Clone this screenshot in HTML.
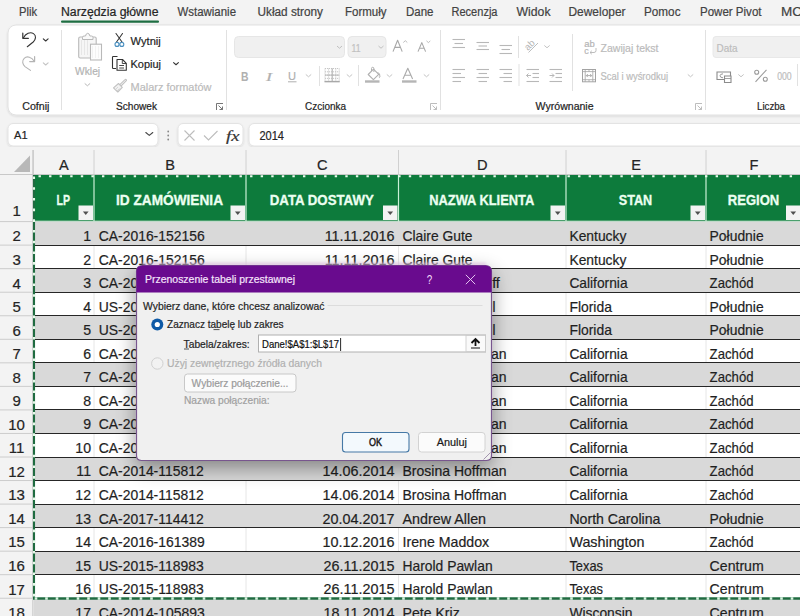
<!DOCTYPE html><html><head><meta charset="utf-8"><style>html,body{margin:0;padding:0;background:#f3f3f3;overflow:hidden;width:800px;height:616px}svg{display:block}text{font-family:"Liberation Sans",sans-serif}</style></head><body>
<svg width="800" height="616" viewBox="0 0 800 616">
<defs><filter id="sh" x="-20%" y="-20%" width="140%" height="150%"><feGaussianBlur in="SourceAlpha" stdDeviation="10"/><feOffset dy="7"/><feComponentTransfer><feFuncA type="linear" slope="0.4"/></feComponentTransfer><feMerge><feMergeNode/><feMergeNode in="SourceGraphic"/></feMerge></filter><filter id="rsh" x="-5%" y="-20%" width="110%" height="140%"><feGaussianBlur in="SourceAlpha" stdDeviation="1"/><feOffset dy="1"/><feComponentTransfer><feFuncA type="linear" slope="0.12"/></feComponentTransfer><feMerge><feMergeNode/><feMergeNode in="SourceGraphic"/></feMerge></filter><filter id="pg" x="-10%" y="-200%" width="120%" height="500%"><feGaussianBlur stdDeviation="1"/></filter></defs>
<rect x="0" y="0" width="800" height="616" fill="#f3f3f3" />
<text x="19" y="16" font-size="12" fill="#424242" stroke="#424242" stroke-width="0.2" textLength="18" lengthAdjust="spacingAndGlyphs">Plik</text>
<text x="61" y="16" font-size="12" fill="#242424" stroke="#242424" stroke-width="0.2" textLength="97.5" lengthAdjust="spacingAndGlyphs">Narzędzia główne</text>
<text x="177.5" y="16" font-size="12" fill="#424242" stroke="#424242" stroke-width="0.2" textLength="58.5" lengthAdjust="spacingAndGlyphs">Wstawianie</text>
<text x="257.5" y="16" font-size="12" fill="#424242" stroke="#424242" stroke-width="0.2" textLength="65.5" lengthAdjust="spacingAndGlyphs">Układ strony</text>
<text x="345" y="16" font-size="12" fill="#424242" stroke="#424242" stroke-width="0.2" textLength="41.5" lengthAdjust="spacingAndGlyphs">Formuły</text>
<text x="406" y="16" font-size="12" fill="#424242" stroke="#424242" stroke-width="0.2" textLength="27.5" lengthAdjust="spacingAndGlyphs">Dane</text>
<text x="451.5" y="16" font-size="12" fill="#424242" stroke="#424242" stroke-width="0.2" textLength="46.0" lengthAdjust="spacingAndGlyphs">Recenzja</text>
<text x="516.5" y="16" font-size="12" fill="#424242" stroke="#424242" stroke-width="0.2" textLength="34.0" lengthAdjust="spacingAndGlyphs">Widok</text>
<text x="568.5" y="16" font-size="12" fill="#424242" stroke="#424242" stroke-width="0.2" textLength="57.0" lengthAdjust="spacingAndGlyphs">Deweloper</text>
<text x="644" y="16" font-size="12" fill="#424242" stroke="#424242" stroke-width="0.2" textLength="36.5" lengthAdjust="spacingAndGlyphs">Pomoc</text>
<text x="700" y="16" font-size="12" fill="#424242" stroke="#424242" stroke-width="0.2" textLength="61.5" lengthAdjust="spacingAndGlyphs">Power Pivot</text>
<text x="781" y="16" font-size="12" fill="#424242" stroke="#424242" stroke-width="0.2" textLength="21" lengthAdjust="spacingAndGlyphs">MC</text>
<rect x="61" y="20.5" width="98" height="2.2" fill="#1e6e42" rx="1" />
<g filter="url(#rsh)">
<rect x="8" y="25" width="820" height="90" fill="#ffffff" stroke="#e1e1e1" stroke-width="1" rx="8" />
</g>
<line x1="61.5" y1="30" x2="61.5" y2="110" stroke="#e1e1e1" stroke-width="1" />
<line x1="226.5" y1="30" x2="226.5" y2="110" stroke="#e1e1e1" stroke-width="1" />
<line x1="440.5" y1="30" x2="440.5" y2="110" stroke="#e1e1e1" stroke-width="1" />
<line x1="705.5" y1="30" x2="705.5" y2="110" stroke="#e1e1e1" stroke-width="1" />
<text x="22.2" y="110" font-size="10" fill="#242424" stroke="#242424" stroke-width="0.2" textLength="27.3" lengthAdjust="spacingAndGlyphs">Cofnij</text>
<text x="116" y="110" font-size="10" fill="#242424" stroke="#242424" stroke-width="0.2" textLength="41" lengthAdjust="spacingAndGlyphs">Schowek</text>
<text x="305" y="110" font-size="10" fill="#242424" stroke="#242424" stroke-width="0.2" textLength="41" lengthAdjust="spacingAndGlyphs">Czcionka</text>
<text x="535.6" y="110" font-size="10" fill="#242424" stroke="#242424" stroke-width="0.2" textLength="58" lengthAdjust="spacingAndGlyphs">Wyrównanie</text>
<text x="757" y="110" font-size="10" fill="#242424" stroke="#242424" stroke-width="0.2" textLength="28" lengthAdjust="spacingAndGlyphs">Liczba</text>
<path d="M216.5 110 V103.5 H223" stroke="#666" fill="none" stroke-width="0.9" />
<path d="M218.5 105.5 L222.5 109.5 M222.5 106.5 V109.5 H219.5" stroke="#666" fill="none" stroke-width="0.9" />
<path d="M430.5 110 V103.5 H437" stroke="#b5b5b5" fill="none" stroke-width="0.9" />
<path d="M432.5 105.5 L436.5 109.5 M436.5 106.5 V109.5 H433.5" stroke="#b5b5b5" fill="none" stroke-width="0.9" />
<path d="M695.5 110 V103.5 H702" stroke="#b5b5b5" fill="none" stroke-width="0.9" />
<path d="M697.5 105.5 L701.5 109.5 M701.5 106.5 V109.5 H698.5" stroke="#b5b5b5" fill="none" stroke-width="0.9" />
<path d="M22.8 33.2 V38.3 H28.4" stroke="#333" fill="none" stroke-width="1.2" stroke-linecap="round" stroke-linejoin="round"/>
<path d="M23.3 37.9 C25.8 33.4 30.2 31.6 33.5 33.6 C36.6 35.6 35.8 39.6 33.2 42 L27.3 46.7" stroke="#333" fill="none" stroke-width="1.1" stroke-linecap="round"/>
<path d="M43.300000000000004 38.900000000000006 L45.7 40.980000000000004 L48.1 38.900000000000006" stroke="#333" fill="none" stroke-width="1.1" stroke-linecap="round" stroke-linejoin="round"/>
<path d="M34.6 56.6 V61.6 H29.7" stroke="#b4b4b4" fill="none" stroke-width="1.2" stroke-linecap="round" stroke-linejoin="round"/>
<path d="M34.1 61.2 C31.8 57 27 55.6 24.2 58.3 C21.5 61 22.7 64.5 25 66.6 L30.5 70.4" stroke="#b4b4b4" fill="none" stroke-width="1.1" stroke-linecap="round"/>
<path d="M43.300000000000004 62.900000000000006 L45.7 64.98 L48.1 62.900000000000006" stroke="#c4c4c4" fill="none" stroke-width="1.1" stroke-linecap="round" stroke-linejoin="round"/>
<rect x="78.7" y="37" width="17.5" height="21" fill="#f6f6f6" stroke="#b9b9b9" stroke-width="1.1" rx="1.5" />
<path d="M81.5 40 V55 M84.5 40 V55 M87.5 40 V55" stroke="#e2e2e2" fill="none" stroke-width="0.8" />
<path d="M82.5 39.5 V37.5 Q82.5 36 84 36 H85.5 Q86 33.3 87.7 33.3 Q89.4 33.3 89.9 36 H91.5 Q93 36 93 37.5 V39.5 Z" stroke="#b9b9b9" fill="#f9f9f9" stroke-width="1.0" />
<rect x="90.5" y="44.2" width="11" height="15.8" fill="#fdfdfd" stroke="#b9b9b9" stroke-width="1.1" />
<path d="M92.5 46 V58 M95.5 46 V58 M98.5 46 V58" stroke="#ececec" fill="none" stroke-width="0.7" />
<text x="75.1" y="74.6" font-size="11.2" fill="#b3b3b3" stroke="#b3b3b3" stroke-width="0.2" textLength="25" lengthAdjust="spacingAndGlyphs">Wklej</text>
<path d="M85.0 83.7 L87.4 85.78 L89.80000000000001 83.7" stroke="#b8b8b8" fill="none" stroke-width="1" stroke-linecap="round" stroke-linejoin="round"/>
<path d="M116 33.5 L122 42 M122.5 33.5 L116.5 42" stroke="#333" fill="none" stroke-width="1.05" stroke-linecap="round"/>
<circle cx="117" cy="44.4" r="2" fill="none" stroke="#4a8fbf" stroke-width="1.1"/>
<circle cx="121.8" cy="44.4" r="2" fill="none" stroke="#4a8fbf" stroke-width="1.1"/>
<text x="130.5" y="44.5" font-size="11.2" fill="#242424" stroke="#242424" stroke-width="0.2" textLength="30.3" lengthAdjust="spacingAndGlyphs">Wytnij</text>
<path d="M117.5 56.5 H113.2 Q112.5 56.5 112.5 57.2 V67.8 Q112.5 68.5 113.2 68.5 H116" stroke="#333" fill="none" stroke-width="1.1" />
<path d="M117 59.5 H122.5 L126.3 63.3 V70.3 H117 Z" stroke="#333" fill="none" stroke-width="1.1" stroke-linejoin="round"/>
<path d="M122.3 59.7 V63.5 H126" stroke="#333" fill="none" stroke-width="0.9" />
<path d="M119.2 65.5 H124 M119.2 68 H124" stroke="#333" fill="none" stroke-width="0.9" />
<text x="130.5" y="67.7" font-size="11.2" fill="#242424" stroke="#242424" stroke-width="0.2" textLength="30.5" lengthAdjust="spacingAndGlyphs">Kopiuj</text>
<path d="M173.6 62.7 L176 64.78 L178.4 62.7" stroke="#333" fill="none" stroke-width="1.1" stroke-linecap="round" stroke-linejoin="round"/>
<path d="M121 86 L126.3 80.7 Q126.8 80 126 79.5 Q125.5 79.2 125 79.7 L119.6 84.8" stroke="#c2c2c2" fill="none" stroke-width="1.1" stroke-linejoin="round"/>
<path d="M118.5 83.5 L122.3 87.3 L117.8 92 L113.5 87.8 Z" stroke="#c2c2c2" fill="#f2f2f2" stroke-width="1.1" stroke-linejoin="round"/>
<path d="M115.5 89.5 L118 87 M117 91 L119.5 88.5" stroke="#cfcfcf" fill="none" stroke-width="0.8" />
<text x="130.5" y="90.7" font-size="11.2" fill="#bbbbbb" stroke="#bbbbbb" stroke-width="0.2" textLength="81" lengthAdjust="spacingAndGlyphs">Malarz formatów</text>
<rect x="234.5" y="36.5" width="110" height="21" fill="#f0f0f0" stroke="#e6e6e6" stroke-width="1" rx="4" />
<path d="M337.3 46.3 L339.5 48.22 L341.7 46.3" stroke="#c0c0c0" fill="none" stroke-width="1" stroke-linecap="round" stroke-linejoin="round"/>
<rect x="348" y="36.5" width="38" height="21" fill="#f0f0f0" stroke="#e6e6e6" stroke-width="1" rx="4" />
<text x="351.5" y="52" font-size="11" fill="#c0c0c0" stroke="#c0c0c0" stroke-width="0.2" textLength="9" lengthAdjust="spacingAndGlyphs">11</text>
<path d="M378.8 46.3 L381 48.22 L383.2 46.3" stroke="#c0c0c0" fill="none" stroke-width="1" stroke-linecap="round" stroke-linejoin="round"/>
<path d="M393 51.6 L397.6 40.3 L402.2 51.6 M394.7 47.4 H400.5" stroke="#a8a8a8" fill="none" stroke-width="1.1" stroke-linejoin="round"/>
<path d="M403.3 42.5 L405.3 40.7 L407.3 42.5" stroke="#b5b5b5" fill="none" stroke-width="0.9" />
<path d="M418 51.6 L421.8 42.6 L425.6 51.6 M419.4 48.2 H424.2" stroke="#a8a8a8" fill="none" stroke-width="1.1" stroke-linejoin="round"/>
<path d="M426.5 40.9 L428.4 42.6 L430.3 40.9" stroke="#b5b5b5" fill="none" stroke-width="0.9" />
<text x="241" y="80.5" font-size="12" fill="#b0b0b0" font-weight="bold" textLength="7.5" lengthAdjust="spacingAndGlyphs">B</text>
<text x="266" y="80.5" font-size="12" fill="#b0b0b0" stroke="#b0b0b0" stroke-width="0.2" font-style="italic" style='font-family:"Liberation Serif", serif' textLength="6" lengthAdjust="spacingAndGlyphs">I</text>
<text x="288" y="79.5" font-size="11.5" fill="#b0b0b0" stroke="#b0b0b0" stroke-width="0.2" textLength="8" lengthAdjust="spacingAndGlyphs">U</text>
<line x1="288" y1="81.8" x2="296.5" y2="81.8" stroke="#b0b0b0" stroke-width="1" />
<path d="M306.1 74.7 L308.5 76.78 L310.9 74.7" stroke="#c4c4c4" fill="none" stroke-width="1" stroke-linecap="round" stroke-linejoin="round"/>
<line x1="319.5" y1="66" x2="319.5" y2="86" stroke="#e1e1e1" stroke-width="1" />
<line x1="325" y1="68.5" x2="325" y2="81.5" stroke="#c0c0c0" stroke-width="0.9" stroke-dasharray="1.1 0.9"/>
<line x1="328.6" y1="68.5" x2="328.6" y2="81.5" stroke="#c0c0c0" stroke-width="0.9" stroke-dasharray="1.1 0.9"/>
<line x1="332.2" y1="68.5" x2="332.2" y2="81.5" stroke="#c0c0c0" stroke-width="0.9" stroke-dasharray="1.1 0.9"/>
<line x1="335.8" y1="68.5" x2="335.8" y2="81.5" stroke="#c0c0c0" stroke-width="0.9" stroke-dasharray="1.1 0.9"/>
<line x1="339.2" y1="68.5" x2="339.2" y2="81.5" stroke="#c0c0c0" stroke-width="0.9" stroke-dasharray="1.1 0.9"/>
<line x1="325" y1="68.5" x2="339.2" y2="68.5" stroke="#c0c0c0" stroke-width="0.9" stroke-dasharray="1.1 0.9"/>
<line x1="325" y1="71.8" x2="339.2" y2="71.8" stroke="#c0c0c0" stroke-width="0.9" stroke-dasharray="1.1 0.9"/>
<line x1="325" y1="75.1" x2="339.2" y2="75.1" stroke="#c0c0c0" stroke-width="0.9" stroke-dasharray="1.1 0.9"/>
<line x1="325" y1="78.4" x2="339.2" y2="78.4" stroke="#c0c0c0" stroke-width="0.9" stroke-dasharray="1.1 0.9"/>
<line x1="332.2" y1="68.5" x2="332.2" y2="81.5" stroke="#b0b0b0" stroke-width="0.9" />
<line x1="325" y1="75.1" x2="339.2" y2="75.1" stroke="#b0b0b0" stroke-width="0.9" />
<line x1="324.5" y1="81.6" x2="339.7" y2="81.6" stroke="#a8a8a8" stroke-width="1.5" />
<path d="M347.1 74.7 L349.5 76.78 L351.9 74.7" stroke="#c4c4c4" fill="none" stroke-width="1" stroke-linecap="round" stroke-linejoin="round"/>
<line x1="358.5" y1="65" x2="358.5" y2="86" stroke="#e1e1e1" stroke-width="1" />
<g transform="translate(1.2,0)">
<path d="M367 74.5 L372.3 69.2 L377.5 74.4 L372.2 79.7 Z" stroke="#b0b0b0" fill="none" stroke-width="1.1" stroke-linejoin="round"/>
<path d="M370.3 71.2 V68.5 Q370.3 67.3 371.5 67.3 Q372.7 67.3 372.7 68.5 V72" stroke="#b0b0b0" fill="none" stroke-width="1" />
<path d="M376.5 72.2 Q379 73.5 378.8 77 Q378.3 78 377.6 77" stroke="#b0b0b0" fill="none" stroke-width="1" />
</g>
<rect x="365" y="80.3" width="14.5" height="2.4" fill="#b5b5b5" />
<path d="M387.1 74.7 L389.5 76.78 L391.9 74.7" stroke="#c4c4c4" fill="none" stroke-width="1" stroke-linecap="round" stroke-linejoin="round"/>
<path d="M403 79 L407.8 68.3 L412.6 79 M404.7 75.3 H410.9" stroke="#ababab" fill="none" stroke-width="1.1" stroke-linejoin="round"/>
<rect x="402" y="80.3" width="14.5" height="2.4" fill="#b5b5b5" />
<path d="M424.1 74.7 L426.5 76.78 L428.9 74.7" stroke="#c4c4c4" fill="none" stroke-width="1" stroke-linecap="round" stroke-linejoin="round"/>
<line x1="452.5" y1="39.5" x2="465" y2="39.5" stroke="#b8b8b8" stroke-width="1.1" />
<line x1="454.5" y1="43.5" x2="463" y2="43.5" stroke="#b8b8b8" stroke-width="1.1" />
<line x1="452.5" y1="47.5" x2="465" y2="47.5" stroke="#b8b8b8" stroke-width="1.1" />
<line x1="476.5" y1="42.5" x2="489" y2="42.5" stroke="#b8b8b8" stroke-width="1.1" />
<line x1="478.5" y1="46" x2="487" y2="46" stroke="#b8b8b8" stroke-width="1.1" />
<line x1="476.5" y1="49.5" x2="489" y2="49.5" stroke="#b8b8b8" stroke-width="1.1" />
<line x1="499.5" y1="45.5" x2="512" y2="45.5" stroke="#b8b8b8" stroke-width="1.1" />
<line x1="501.5" y1="49.5" x2="510" y2="49.5" stroke="#b8b8b8" stroke-width="1.1" />
<line x1="499.5" y1="53.5" x2="512" y2="53.5" stroke="#b8b8b8" stroke-width="1.1" />
<line x1="518.5" y1="36" x2="518.5" y2="58" stroke="#e1e1e1" stroke-width="1" />
<text transform="translate(528,51) rotate(-45)" font-size="9.5" fill="#b5b5b5">ab</text>
<path d="M528.5 52.5 L538 43" stroke="#b5b5b5" fill="none" stroke-width="0.9" />
<path d="M544.6 45.7 L547 47.78 L549.4 45.7" stroke="#c4c4c4" fill="none" stroke-width="1" stroke-linecap="round" stroke-linejoin="round"/>
<line x1="452.5" y1="69.5" x2="465" y2="69.5" stroke="#b8b8b8" stroke-width="1.1" />
<line x1="452.5" y1="73.5" x2="461" y2="73.5" stroke="#b8b8b8" stroke-width="1.1" />
<line x1="452.5" y1="77.5" x2="465" y2="77.5" stroke="#b8b8b8" stroke-width="1.1" />
<line x1="452.5" y1="81.5" x2="461" y2="81.5" stroke="#b8b8b8" stroke-width="1.1" />
<line x1="476.5" y1="69.5" x2="489" y2="69.5" stroke="#b8b8b8" stroke-width="1.1" />
<line x1="478.5" y1="73.5" x2="487" y2="73.5" stroke="#b8b8b8" stroke-width="1.1" />
<line x1="476.5" y1="77.5" x2="489" y2="77.5" stroke="#b8b8b8" stroke-width="1.1" />
<line x1="478.5" y1="81.5" x2="487" y2="81.5" stroke="#b8b8b8" stroke-width="1.1" />
<line x1="499.5" y1="69.5" x2="512" y2="69.5" stroke="#b8b8b8" stroke-width="1.1" />
<line x1="503.5" y1="73.5" x2="512" y2="73.5" stroke="#b8b8b8" stroke-width="1.1" />
<line x1="499.5" y1="77.5" x2="512" y2="77.5" stroke="#b8b8b8" stroke-width="1.1" />
<line x1="503.5" y1="81.5" x2="512" y2="81.5" stroke="#b8b8b8" stroke-width="1.1" />
<line x1="519" y1="64" x2="519" y2="86" stroke="#e1e1e1" stroke-width="1" />
<line x1="526.5" y1="69.5" x2="539" y2="69.5" stroke="#b8b8b8" stroke-width="1.1" />
<line x1="532.5" y1="73.5" x2="539" y2="73.5" stroke="#b8b8b8" stroke-width="1.1" />
<line x1="532.5" y1="77.5" x2="539" y2="77.5" stroke="#b8b8b8" stroke-width="1.1" />
<line x1="526.5" y1="81.5" x2="539" y2="81.5" stroke="#b8b8b8" stroke-width="1.1" />
<path d="M531 75.5 H526.5 M528.5 73.5 L526.5 75.5 L528.5 77.5" stroke="#b8b8b8" fill="none" stroke-width="1" />
<line x1="549.5" y1="69.5" x2="562" y2="69.5" stroke="#b8b8b8" stroke-width="1.1" />
<line x1="555.5" y1="73.5" x2="562" y2="73.5" stroke="#b8b8b8" stroke-width="1.1" />
<line x1="555.5" y1="77.5" x2="562" y2="77.5" stroke="#b8b8b8" stroke-width="1.1" />
<line x1="549.5" y1="81.5" x2="562" y2="81.5" stroke="#b8b8b8" stroke-width="1.1" />
<path d="M549.5 75.5 H554 M552 73.5 L554 75.5 L552 77.5" stroke="#b8b8b8" fill="none" stroke-width="1" />
<line x1="572.5" y1="34" x2="572.5" y2="91" stroke="#e1e1e1" stroke-width="1" />
<text x="584.3" y="47" font-size="9" fill="#b5b5b5" stroke="#b5b5b5" stroke-width="0.2" textLength="10.5" lengthAdjust="spacingAndGlyphs">ab</text>
<text x="584.3" y="53.5" font-size="9" fill="#b5b5b5" stroke="#b5b5b5" stroke-width="0.2" textLength="4.5" lengthAdjust="spacingAndGlyphs">c</text>
<path d="M596 48 V50.5 Q596 52.5 594 52.5 H590 M591.8 50.8 L590 52.5 L591.8 54.2" stroke="#b5b5b5" fill="none" stroke-width="0.9" />
<text x="600.5" y="51.5" font-size="11.2" fill="#bbbbbb" stroke="#bbbbbb" stroke-width="0.2" textLength="58" lengthAdjust="spacingAndGlyphs">Zawijaj tekst</text>
<rect x="582.5" y="69.5" width="13" height="12.3" fill="none" stroke="#a3a3a3" stroke-width="1" />
<line x1="585.2" y1="69.5" x2="585.2" y2="81.8" stroke="#a3a3a3" stroke-width="0.8" />
<line x1="592.8" y1="69.5" x2="592.8" y2="81.8" stroke="#a3a3a3" stroke-width="0.8" />
<line x1="582.5" y1="71.6" x2="595.5" y2="71.6" stroke="#a3a3a3" stroke-width="0.8" />
<line x1="582.5" y1="79.7" x2="595.5" y2="79.7" stroke="#a3a3a3" stroke-width="0.8" />
<line x1="589" y1="69.5" x2="589" y2="71.6" stroke="#a3a3a3" stroke-width="0.8" />
<line x1="589" y1="79.7" x2="589" y2="81.8" stroke="#a3a3a3" stroke-width="0.8" />
<path d="M586.3 75.6 H591.7 M587.8 74.1 L586.3 75.6 L587.8 77.1 M590.2 74.1 L591.7 75.6 L590.2 77.1" stroke="#a3a3a3" fill="none" stroke-width="0.9" />
<text x="600.5" y="80" font-size="11.2" fill="#bbbbbb" stroke="#bbbbbb" stroke-width="0.2" textLength="67.5" lengthAdjust="spacingAndGlyphs">Scal i wyśrodkuj</text>
<path d="M688.1 74.7 L690.5 76.78 L692.9 74.7" stroke="#c4c4c4" fill="none" stroke-width="1" stroke-linecap="round" stroke-linejoin="round"/>
<rect x="713" y="36.5" width="100" height="21" fill="#f0f0f0" stroke="#e8e8e8" stroke-width="1" rx="3" />
<text x="716.5" y="51.5" font-size="11" fill="#bdbdbd" stroke="#bdbdbd" stroke-width="0.2" textLength="21" lengthAdjust="spacingAndGlyphs">Data</text>
<path d="M717 72 H730.5 V79.5 H717 Z" stroke="#8c8c8c" fill="none" stroke-width="1.1" />
<path d="M723 73.8 Q720 74 720 75.8 Q720 77.6 723 77.8" stroke="#8c8c8c" fill="none" stroke-width="0.9" />
<path d="M724.5 76 H731 V82.5 H724.5 Z" stroke="#8c8c8c" fill="#ffffff" stroke-width="1.1" />
<line x1="724.5" y1="78.5" x2="731" y2="78.5" stroke="#8c8c8c" stroke-width="0.8" />
<path d="M738.6 74.7 L741 76.78 L743.4 74.7" stroke="#c4c4c4" fill="none" stroke-width="1" stroke-linecap="round" stroke-linejoin="round"/>
<circle cx="756.7" cy="72.2" r="2" fill="none" stroke="#9a9a9a" stroke-width="1.1"/>
<circle cx="765.3" cy="79.3" r="2" fill="none" stroke="#9a9a9a" stroke-width="1.1"/>
<line x1="766.5" y1="69.8" x2="755.5" y2="81.8" stroke="#9a9a9a" stroke-width="1.1" />
<text x="777.2" y="79.5" font-size="10" fill="#bdbdbd" stroke="#bdbdbd" stroke-width="0.2" textLength="14.5" lengthAdjust="spacingAndGlyphs">000</text>
<line x1="797.5" y1="64" x2="797.5" y2="86" stroke="#e1e1e1" stroke-width="1" />
<g filter="url(#rsh)">
<rect x="8" y="123.5" width="150" height="22.5" fill="#ffffff" stroke="#e3e3e3" stroke-width="1" rx="5" />
<rect x="178" y="123.5" width="65" height="22.5" fill="#ffffff" stroke="#e3e3e3" stroke-width="1" rx="5" />
<rect x="249" y="123.5" width="580" height="22.5" fill="#ffffff" stroke="#e3e3e3" stroke-width="1" rx="5" />
</g>
<text x="14" y="138.8" font-size="11.2" fill="#242424" stroke="#242424" stroke-width="0.2" textLength="13.6" lengthAdjust="spacingAndGlyphs">A1</text>
<path d="M145.8 132.5 L149.3 135.38000000000002 L152.8 132.5" stroke="#444" fill="none" stroke-width="1.1" stroke-linecap="round" stroke-linejoin="round"/>
<circle cx="168.2" cy="131.5" r="0.9" fill="#888"/>
<circle cx="168.2" cy="135.5" r="0.9" fill="#888"/>
<circle cx="168.2" cy="139.5" r="0.9" fill="#888"/>
<path d="M184.5 130.5 L194.5 140.5 M194.5 130.5 L184.5 140.5" stroke="#bdbdbd" fill="none" stroke-width="1.1" />
<path d="M204 135.5 L208.5 140 L217.5 131" stroke="#bdbdbd" fill="none" stroke-width="1.1" />
<text x="226" y="140.5" font-size="15" fill="#333" stroke="#333" stroke-width="0.2" font-style="italic" style='font-family:"Liberation Serif", serif' textLength="13.5" lengthAdjust="spacingAndGlyphs">fx</text>
<text x="259.4" y="139.5" font-size="12" fill="#242424" stroke="#242424" stroke-width="0.2" textLength="24.6" lengthAdjust="spacingAndGlyphs">2014</text>
<rect x="0" y="147" width="800" height="28" fill="#f3f3f3" />
<line x1="33.5" y1="150" x2="33.5" y2="174.5" stroke="#d0d0d0" stroke-width="1" />
<line x1="94" y1="150" x2="94" y2="174.5" stroke="#d0d0d0" stroke-width="1" />
<line x1="246" y1="150" x2="246" y2="174.5" stroke="#d0d0d0" stroke-width="1" />
<line x1="398.5" y1="150" x2="398.5" y2="174.5" stroke="#d0d0d0" stroke-width="1" />
<line x1="566" y1="150" x2="566" y2="174.5" stroke="#d0d0d0" stroke-width="1" />
<line x1="706" y1="150" x2="706" y2="174.5" stroke="#d0d0d0" stroke-width="1" />
<line x1="0" y1="174.5" x2="800" y2="174.5" stroke="#c8c8c8" stroke-width="1" />
<path d="M30 155.5 L30 172 L14 172 Z" stroke="none" fill="#b8b8b8" stroke-width="1" />
<text x="63.75" y="170" font-size="14.6" fill="#242424" stroke="#242424" stroke-width="0.2" text-anchor="middle">A</text>
<text x="170.0" y="170" font-size="14.6" fill="#242424" stroke="#242424" stroke-width="0.2" text-anchor="middle">B</text>
<text x="322.25" y="170" font-size="14.6" fill="#242424" stroke="#242424" stroke-width="0.2" text-anchor="middle">C</text>
<text x="482.25" y="170" font-size="14.6" fill="#242424" stroke="#242424" stroke-width="0.2" text-anchor="middle">D</text>
<text x="636.0" y="170" font-size="14.6" fill="#242424" stroke="#242424" stroke-width="0.2" text-anchor="middle">E</text>
<text x="754.0" y="170" font-size="14.6" fill="#242424" stroke="#242424" stroke-width="0.2" text-anchor="middle">F</text>
<rect x="0" y="175" width="33.5" height="441" fill="#f3f3f3" />
<line x1="32.8" y1="150" x2="32.8" y2="616" stroke="#c8c8c8" stroke-width="1" />
<text x="16.7" y="216" font-size="15" fill="#242424" stroke="#242424" stroke-width="0.2" text-anchor="middle">1</text>
<line x1="0" y1="221.6" x2="32.8" y2="221.6" stroke="#cccccc" stroke-width="1" />
<text x="16.6" y="241.44" font-size="15" fill="#242424" stroke="#242424" stroke-width="0.2" text-anchor="middle">2</text>
<line x1="0" y1="245.14" x2="32.8" y2="245.14" stroke="#cccccc" stroke-width="1" />
<text x="16.6" y="264.98" font-size="15" fill="#242424" stroke="#242424" stroke-width="0.2" text-anchor="middle">3</text>
<line x1="0" y1="268.68" x2="32.8" y2="268.68" stroke="#cccccc" stroke-width="1" />
<text x="16.6" y="288.52000000000004" font-size="15" fill="#242424" stroke="#242424" stroke-width="0.2" text-anchor="middle">4</text>
<line x1="0" y1="292.22" x2="32.8" y2="292.22" stroke="#cccccc" stroke-width="1" />
<text x="16.6" y="312.06000000000006" font-size="15" fill="#242424" stroke="#242424" stroke-width="0.2" text-anchor="middle">5</text>
<line x1="0" y1="315.76000000000005" x2="32.8" y2="315.76000000000005" stroke="#cccccc" stroke-width="1" />
<text x="16.6" y="335.6" font-size="15" fill="#242424" stroke="#242424" stroke-width="0.2" text-anchor="middle">6</text>
<line x1="0" y1="339.3" x2="32.8" y2="339.3" stroke="#cccccc" stroke-width="1" />
<text x="16.6" y="359.14" font-size="15" fill="#242424" stroke="#242424" stroke-width="0.2" text-anchor="middle">7</text>
<line x1="0" y1="362.84" x2="32.8" y2="362.84" stroke="#cccccc" stroke-width="1" />
<text x="16.6" y="382.68000000000006" font-size="15" fill="#242424" stroke="#242424" stroke-width="0.2" text-anchor="middle">8</text>
<line x1="0" y1="386.38000000000005" x2="32.8" y2="386.38000000000005" stroke="#cccccc" stroke-width="1" />
<text x="16.6" y="406.22" font-size="15" fill="#242424" stroke="#242424" stroke-width="0.2" text-anchor="middle">9</text>
<line x1="0" y1="409.92" x2="32.8" y2="409.92" stroke="#cccccc" stroke-width="1" />
<text x="16.6" y="429.76" font-size="15" fill="#242424" stroke="#242424" stroke-width="0.2" text-anchor="middle">10</text>
<line x1="0" y1="433.46" x2="32.8" y2="433.46" stroke="#cccccc" stroke-width="1" />
<text x="16.6" y="453.3" font-size="15" fill="#242424" stroke="#242424" stroke-width="0.2" text-anchor="middle">11</text>
<line x1="0" y1="457.0" x2="32.8" y2="457.0" stroke="#cccccc" stroke-width="1" />
<text x="16.6" y="476.84000000000003" font-size="15" fill="#242424" stroke="#242424" stroke-width="0.2" text-anchor="middle">12</text>
<line x1="0" y1="480.54" x2="32.8" y2="480.54" stroke="#cccccc" stroke-width="1" />
<text x="16.6" y="500.38" font-size="15" fill="#242424" stroke="#242424" stroke-width="0.2" text-anchor="middle">13</text>
<line x1="0" y1="504.08" x2="32.8" y2="504.08" stroke="#cccccc" stroke-width="1" />
<text x="16.6" y="523.92" font-size="15" fill="#242424" stroke="#242424" stroke-width="0.2" text-anchor="middle">14</text>
<line x1="0" y1="527.62" x2="32.8" y2="527.62" stroke="#cccccc" stroke-width="1" />
<text x="16.6" y="547.4599999999999" font-size="15" fill="#242424" stroke="#242424" stroke-width="0.2" text-anchor="middle">15</text>
<line x1="0" y1="551.16" x2="32.8" y2="551.16" stroke="#cccccc" stroke-width="1" />
<text x="16.6" y="570.9999999999999" font-size="15" fill="#242424" stroke="#242424" stroke-width="0.2" text-anchor="middle">16</text>
<line x1="0" y1="574.6999999999999" x2="32.8" y2="574.6999999999999" stroke="#cccccc" stroke-width="1" />
<text x="16.6" y="594.5399999999998" font-size="15" fill="#242424" stroke="#242424" stroke-width="0.2" text-anchor="middle">17</text>
<line x1="0" y1="598.2399999999999" x2="32.8" y2="598.2399999999999" stroke="#cccccc" stroke-width="1" />
<text x="16.6" y="618.0799999999999" font-size="15" fill="#242424" stroke="#242424" stroke-width="0.2" text-anchor="middle">18</text>
<line x1="0" y1="621.78" x2="32.8" y2="621.78" stroke="#cccccc" stroke-width="1" />
<rect x="33.5" y="175" width="766.5" height="46.6" fill="#0d7b3c" />
<line x1="94" y1="175" x2="94" y2="221.6" stroke="#c9f0d6" stroke-width="1.2" />
<line x1="246" y1="175" x2="246" y2="221.6" stroke="#c9f0d6" stroke-width="1.2" />
<line x1="398.5" y1="175" x2="398.5" y2="221.6" stroke="#c9f0d6" stroke-width="1.2" />
<line x1="566" y1="175" x2="566" y2="221.6" stroke="#c9f0d6" stroke-width="1.2" />
<line x1="706" y1="175" x2="706" y2="221.6" stroke="#c9f0d6" stroke-width="1.2" />
<line x1="33.5" y1="221.2" x2="800" y2="221.2" stroke="#d4efdc" stroke-width="1" />
<text x="63.25" y="204.7" font-size="14.3" fill="#eafff0" font-weight="bold" text-anchor="middle" textLength="13.5" lengthAdjust="spacingAndGlyphs" stroke="#f0fff2" stroke-width="0.3">LP</text>
<rect x="78.5" y="205.5" width="14.5" height="14.5" fill="#f3f3f3" />
<path d="M82.9 211.4 L88.6 211.4 L85.75 215 Z" stroke="none" fill="#505050" stroke-width="1" />
<text x="169.5" y="204.7" font-size="14.3" fill="#eafff0" font-weight="bold" text-anchor="middle" textLength="107" lengthAdjust="spacingAndGlyphs" stroke="#f0fff2" stroke-width="0.3">ID ZAMÓWIENIA</text>
<rect x="230.5" y="205.5" width="14.5" height="14.5" fill="#f3f3f3" />
<path d="M234.9 211.4 L240.6 211.4 L237.75 215 Z" stroke="none" fill="#505050" stroke-width="1" />
<text x="321.75" y="204.7" font-size="14.3" fill="#eafff0" font-weight="bold" text-anchor="middle" textLength="104" lengthAdjust="spacingAndGlyphs" stroke="#f0fff2" stroke-width="0.3">DATA DOSTAWY</text>
<rect x="383.0" y="205.5" width="14.5" height="14.5" fill="#f3f3f3" />
<path d="M387.4 211.4 L393.1 211.4 L390.25 215 Z" stroke="none" fill="#505050" stroke-width="1" />
<text x="481.75" y="204.7" font-size="14.3" fill="#eafff0" font-weight="bold" text-anchor="middle" textLength="105" lengthAdjust="spacingAndGlyphs" stroke="#f0fff2" stroke-width="0.3">NAZWA KLIENTA</text>
<rect x="550.5" y="205.5" width="14.5" height="14.5" fill="#f3f3f3" />
<path d="M554.9 211.4 L560.6 211.4 L557.75 215 Z" stroke="none" fill="#505050" stroke-width="1" />
<text x="635.5" y="204.7" font-size="14.3" fill="#eafff0" font-weight="bold" text-anchor="middle" textLength="33.5" lengthAdjust="spacingAndGlyphs" stroke="#f0fff2" stroke-width="0.3">STAN</text>
<rect x="690.5" y="205.5" width="14.5" height="14.5" fill="#f3f3f3" />
<path d="M694.9 211.4 L700.6 211.4 L697.75 215 Z" stroke="none" fill="#505050" stroke-width="1" />
<text x="753.5" y="204.7" font-size="14.3" fill="#eafff0" font-weight="bold" text-anchor="middle" textLength="51.5" lengthAdjust="spacingAndGlyphs" stroke="#f0fff2" stroke-width="0.3">REGION</text>
<rect x="786" y="205.5" width="14.5" height="14.5" fill="#f3f3f3" />
<path d="M790.4 211.4 L796.1 211.4 L793.25 215 Z" stroke="none" fill="#505050" stroke-width="1" />
<rect x="33.5" y="221.6" width="766.5" height="23.54" fill="#d9d9d9" />
<rect x="33.5" y="245.14" width="766.5" height="23.54" fill="#ffffff" />
<line x1="94" y1="245.14" x2="94" y2="268.68" stroke="#e6e6e6" stroke-width="1" />
<line x1="246" y1="245.14" x2="246" y2="268.68" stroke="#e6e6e6" stroke-width="1" />
<line x1="398.5" y1="245.14" x2="398.5" y2="268.68" stroke="#e6e6e6" stroke-width="1" />
<line x1="566" y1="245.14" x2="566" y2="268.68" stroke="#e6e6e6" stroke-width="1" />
<line x1="706" y1="245.14" x2="706" y2="268.68" stroke="#e6e6e6" stroke-width="1" />
<rect x="33.5" y="268.68" width="766.5" height="23.54" fill="#d9d9d9" />
<rect x="33.5" y="292.22" width="766.5" height="23.54" fill="#ffffff" />
<line x1="94" y1="292.22" x2="94" y2="315.76000000000005" stroke="#e6e6e6" stroke-width="1" />
<line x1="246" y1="292.22" x2="246" y2="315.76000000000005" stroke="#e6e6e6" stroke-width="1" />
<line x1="398.5" y1="292.22" x2="398.5" y2="315.76000000000005" stroke="#e6e6e6" stroke-width="1" />
<line x1="566" y1="292.22" x2="566" y2="315.76000000000005" stroke="#e6e6e6" stroke-width="1" />
<line x1="706" y1="292.22" x2="706" y2="315.76000000000005" stroke="#e6e6e6" stroke-width="1" />
<rect x="33.5" y="315.76" width="766.5" height="23.54" fill="#d9d9d9" />
<rect x="33.5" y="339.29999999999995" width="766.5" height="23.54" fill="#ffffff" />
<line x1="94" y1="339.29999999999995" x2="94" y2="362.84" stroke="#e6e6e6" stroke-width="1" />
<line x1="246" y1="339.29999999999995" x2="246" y2="362.84" stroke="#e6e6e6" stroke-width="1" />
<line x1="398.5" y1="339.29999999999995" x2="398.5" y2="362.84" stroke="#e6e6e6" stroke-width="1" />
<line x1="566" y1="339.29999999999995" x2="566" y2="362.84" stroke="#e6e6e6" stroke-width="1" />
<line x1="706" y1="339.29999999999995" x2="706" y2="362.84" stroke="#e6e6e6" stroke-width="1" />
<rect x="33.5" y="362.84000000000003" width="766.5" height="23.54" fill="#d9d9d9" />
<rect x="33.5" y="386.38" width="766.5" height="23.54" fill="#ffffff" />
<line x1="94" y1="386.38" x2="94" y2="409.92" stroke="#e6e6e6" stroke-width="1" />
<line x1="246" y1="386.38" x2="246" y2="409.92" stroke="#e6e6e6" stroke-width="1" />
<line x1="398.5" y1="386.38" x2="398.5" y2="409.92" stroke="#e6e6e6" stroke-width="1" />
<line x1="566" y1="386.38" x2="566" y2="409.92" stroke="#e6e6e6" stroke-width="1" />
<line x1="706" y1="386.38" x2="706" y2="409.92" stroke="#e6e6e6" stroke-width="1" />
<rect x="33.5" y="409.91999999999996" width="766.5" height="23.54" fill="#d9d9d9" />
<rect x="33.5" y="433.46" width="766.5" height="23.54" fill="#ffffff" />
<line x1="94" y1="433.46" x2="94" y2="457.0" stroke="#e6e6e6" stroke-width="1" />
<line x1="246" y1="433.46" x2="246" y2="457.0" stroke="#e6e6e6" stroke-width="1" />
<line x1="398.5" y1="433.46" x2="398.5" y2="457.0" stroke="#e6e6e6" stroke-width="1" />
<line x1="566" y1="433.46" x2="566" y2="457.0" stroke="#e6e6e6" stroke-width="1" />
<line x1="706" y1="433.46" x2="706" y2="457.0" stroke="#e6e6e6" stroke-width="1" />
<rect x="33.5" y="457.0" width="766.5" height="23.54" fill="#d9d9d9" />
<rect x="33.5" y="480.53999999999996" width="766.5" height="23.54" fill="#ffffff" />
<line x1="94" y1="480.53999999999996" x2="94" y2="504.08" stroke="#e6e6e6" stroke-width="1" />
<line x1="246" y1="480.53999999999996" x2="246" y2="504.08" stroke="#e6e6e6" stroke-width="1" />
<line x1="398.5" y1="480.53999999999996" x2="398.5" y2="504.08" stroke="#e6e6e6" stroke-width="1" />
<line x1="566" y1="480.53999999999996" x2="566" y2="504.08" stroke="#e6e6e6" stroke-width="1" />
<line x1="706" y1="480.53999999999996" x2="706" y2="504.08" stroke="#e6e6e6" stroke-width="1" />
<rect x="33.5" y="504.08000000000004" width="766.5" height="23.54" fill="#d9d9d9" />
<rect x="33.5" y="527.62" width="766.5" height="23.54" fill="#ffffff" />
<line x1="94" y1="527.62" x2="94" y2="551.16" stroke="#e6e6e6" stroke-width="1" />
<line x1="246" y1="527.62" x2="246" y2="551.16" stroke="#e6e6e6" stroke-width="1" />
<line x1="398.5" y1="527.62" x2="398.5" y2="551.16" stroke="#e6e6e6" stroke-width="1" />
<line x1="566" y1="527.62" x2="566" y2="551.16" stroke="#e6e6e6" stroke-width="1" />
<line x1="706" y1="527.62" x2="706" y2="551.16" stroke="#e6e6e6" stroke-width="1" />
<rect x="33.5" y="551.16" width="766.5" height="23.54" fill="#d9d9d9" />
<rect x="33.5" y="574.6999999999999" width="766.5" height="23.54" fill="#ffffff" />
<line x1="94" y1="574.6999999999999" x2="94" y2="598.2399999999999" stroke="#e6e6e6" stroke-width="1" />
<line x1="246" y1="574.6999999999999" x2="246" y2="598.2399999999999" stroke="#e6e6e6" stroke-width="1" />
<line x1="398.5" y1="574.6999999999999" x2="398.5" y2="598.2399999999999" stroke="#e6e6e6" stroke-width="1" />
<line x1="566" y1="574.6999999999999" x2="566" y2="598.2399999999999" stroke="#e6e6e6" stroke-width="1" />
<line x1="706" y1="574.6999999999999" x2="706" y2="598.2399999999999" stroke="#e6e6e6" stroke-width="1" />
<rect x="33.5" y="598.24" width="766.5" height="23.54" fill="#d9d9d9" />
<line x1="33.5" y1="245.5" x2="800" y2="245.5" stroke="#262626" stroke-width="1.15" />
<line x1="33.5" y1="268.5" x2="800" y2="268.5" stroke="#262626" stroke-width="1.15" />
<line x1="33.5" y1="292.5" x2="800" y2="292.5" stroke="#262626" stroke-width="1.15" />
<line x1="33.5" y1="315.5" x2="800" y2="315.5" stroke="#262626" stroke-width="1.15" />
<line x1="33.5" y1="339.5" x2="800" y2="339.5" stroke="#262626" stroke-width="1.15" />
<line x1="33.5" y1="362.5" x2="800" y2="362.5" stroke="#262626" stroke-width="1.15" />
<line x1="33.5" y1="386.5" x2="800" y2="386.5" stroke="#262626" stroke-width="1.15" />
<line x1="33.5" y1="409.5" x2="800" y2="409.5" stroke="#262626" stroke-width="1.15" />
<line x1="33.5" y1="433.5" x2="800" y2="433.5" stroke="#262626" stroke-width="1.15" />
<line x1="33.5" y1="457.5" x2="800" y2="457.5" stroke="#262626" stroke-width="1.15" />
<line x1="33.5" y1="480.5" x2="800" y2="480.5" stroke="#262626" stroke-width="1.15" />
<line x1="33.5" y1="504.5" x2="800" y2="504.5" stroke="#262626" stroke-width="1.15" />
<line x1="33.5" y1="527.5" x2="800" y2="527.5" stroke="#262626" stroke-width="1.15" />
<line x1="33.5" y1="551.5" x2="800" y2="551.5" stroke="#262626" stroke-width="1.15" />
<line x1="33.5" y1="574.5" x2="800" y2="574.5" stroke="#262626" stroke-width="1.15" />
<line x1="33.5" y1="598.5" x2="800" y2="598.5" stroke="#262626" stroke-width="1.15" />
<line x1="33.5" y1="621.5" x2="800" y2="621.5" stroke="#262626" stroke-width="1.15" />
<text transform="translate(91,241.04) scale(1.0089,1)" font-size="14" fill="#1f1f1f" stroke="#1f1f1f" stroke-width="0.2" text-anchor="end">1</text>
<text transform="translate(98.7,241.04) scale(0.9947,1)" font-size="14" fill="#1f1f1f" stroke="#1f1f1f" stroke-width="0.2">CA-2016-152156</text>
<text transform="translate(394.5,241.04) scale(1.0277,1)" font-size="14" fill="#1f1f1f" stroke="#1f1f1f" stroke-width="0.2" text-anchor="end">11.11.2016</text>
<text transform="translate(402.5,241.04) scale(0.99,1)" font-size="14" fill="#1f1f1f" stroke="#1f1f1f" stroke-width="0.2">Claire Gute</text>
<text transform="translate(569.4,241.04) scale(0.99,1)" font-size="14" fill="#1f1f1f" stroke="#1f1f1f" stroke-width="0.2">Kentucky</text>
<text transform="translate(709.6,241.04) scale(0.9919,1)" font-size="14" fill="#1f1f1f" stroke="#1f1f1f" stroke-width="0.2">Południe</text>
<text transform="translate(91,264.58) scale(1.0089,1)" font-size="14" fill="#1f1f1f" stroke="#1f1f1f" stroke-width="0.2" text-anchor="end">2</text>
<text transform="translate(98.7,264.58) scale(0.9947,1)" font-size="14" fill="#1f1f1f" stroke="#1f1f1f" stroke-width="0.2">CA-2016-152156</text>
<text transform="translate(394.5,264.58) scale(1.0277,1)" font-size="14" fill="#1f1f1f" stroke="#1f1f1f" stroke-width="0.2" text-anchor="end">11.11.2016</text>
<text transform="translate(402.5,264.58) scale(0.99,1)" font-size="14" fill="#1f1f1f" stroke="#1f1f1f" stroke-width="0.2">Claire Gute</text>
<text transform="translate(569.4,264.58) scale(0.99,1)" font-size="14" fill="#1f1f1f" stroke="#1f1f1f" stroke-width="0.2">Kentucky</text>
<text transform="translate(709.6,264.58) scale(0.9919,1)" font-size="14" fill="#1f1f1f" stroke="#1f1f1f" stroke-width="0.2">Południe</text>
<text transform="translate(91,288.12) scale(1.0089,1)" font-size="14" fill="#1f1f1f" stroke="#1f1f1f" stroke-width="0.2" text-anchor="end">3</text>
<text transform="translate(98.7,288.12) scale(0.9947,1)" font-size="14" fill="#1f1f1f" stroke="#1f1f1f" stroke-width="0.2">CA-2016-138688</text>
<text transform="translate(394.5,288.12) scale(1.0277,1)" font-size="14" fill="#1f1f1f" stroke="#1f1f1f" stroke-width="0.2" text-anchor="end">16.06.2016</text>
<text transform="translate(402.5,288.12) scale(1.023,1)" font-size="14" fill="#1f1f1f" stroke="#1f1f1f" stroke-width="0.2">Darrin Van Huff</text>
<text transform="translate(569.4,288.12) scale(0.9853,1)" font-size="14" fill="#1f1f1f" stroke="#1f1f1f" stroke-width="0.2">California</text>
<text transform="translate(709.6,288.12) scale(0.9429,1)" font-size="14" fill="#1f1f1f" stroke="#1f1f1f" stroke-width="0.2">Zachód</text>
<text transform="translate(91,311.66) scale(1.0089,1)" font-size="14" fill="#1f1f1f" stroke="#1f1f1f" stroke-width="0.2" text-anchor="end">4</text>
<text transform="translate(98.7,311.66) scale(0.9947,1)" font-size="14" fill="#1f1f1f" stroke="#1f1f1f" stroke-width="0.2">US-2015-108966</text>
<text transform="translate(394.5,311.66) scale(1.0277,1)" font-size="14" fill="#1f1f1f" stroke="#1f1f1f" stroke-width="0.2" text-anchor="end">18.10.2015</text>
<text transform="translate(402.5,311.66) scale(0.9523,1)" font-size="14" fill="#1f1f1f" stroke="#1f1f1f" stroke-width="0.2">Sean O&#x27;Donnell</text>
<text transform="translate(569.4,311.66) scale(0.9938,1)" font-size="14" fill="#1f1f1f" stroke="#1f1f1f" stroke-width="0.2">Florida</text>
<text transform="translate(709.6,311.66) scale(0.9919,1)" font-size="14" fill="#1f1f1f" stroke="#1f1f1f" stroke-width="0.2">Południe</text>
<text transform="translate(91,335.2) scale(1.0089,1)" font-size="14" fill="#1f1f1f" stroke="#1f1f1f" stroke-width="0.2" text-anchor="end">5</text>
<text transform="translate(98.7,335.2) scale(0.9947,1)" font-size="14" fill="#1f1f1f" stroke="#1f1f1f" stroke-width="0.2">US-2015-108966</text>
<text transform="translate(394.5,335.2) scale(1.0277,1)" font-size="14" fill="#1f1f1f" stroke="#1f1f1f" stroke-width="0.2" text-anchor="end">18.10.2015</text>
<text transform="translate(402.5,335.2) scale(0.9523,1)" font-size="14" fill="#1f1f1f" stroke="#1f1f1f" stroke-width="0.2">Sean O&#x27;Donnell</text>
<text transform="translate(569.4,335.2) scale(0.9938,1)" font-size="14" fill="#1f1f1f" stroke="#1f1f1f" stroke-width="0.2">Florida</text>
<text transform="translate(709.6,335.2) scale(0.9919,1)" font-size="14" fill="#1f1f1f" stroke="#1f1f1f" stroke-width="0.2">Południe</text>
<text transform="translate(91,358.73999999999995) scale(1.0089,1)" font-size="14" fill="#1f1f1f" stroke="#1f1f1f" stroke-width="0.2" text-anchor="end">6</text>
<text transform="translate(98.7,358.73999999999995) scale(0.9947,1)" font-size="14" fill="#1f1f1f" stroke="#1f1f1f" stroke-width="0.2">CA-2014-115812</text>
<text transform="translate(394.5,358.73999999999995) scale(1.0277,1)" font-size="14" fill="#1f1f1f" stroke="#1f1f1f" stroke-width="0.2" text-anchor="end">09.06.2014</text>
<text transform="translate(402.5,358.73999999999995) scale(1.0013,1)" font-size="14" fill="#1f1f1f" stroke="#1f1f1f" stroke-width="0.2">Brosina Hoffman</text>
<text transform="translate(569.4,358.73999999999995) scale(0.9853,1)" font-size="14" fill="#1f1f1f" stroke="#1f1f1f" stroke-width="0.2">California</text>
<text transform="translate(709.6,358.73999999999995) scale(0.9429,1)" font-size="14" fill="#1f1f1f" stroke="#1f1f1f" stroke-width="0.2">Zachód</text>
<text transform="translate(91,382.28000000000003) scale(1.0089,1)" font-size="14" fill="#1f1f1f" stroke="#1f1f1f" stroke-width="0.2" text-anchor="end">7</text>
<text transform="translate(98.7,382.28000000000003) scale(0.9947,1)" font-size="14" fill="#1f1f1f" stroke="#1f1f1f" stroke-width="0.2">CA-2014-115812</text>
<text transform="translate(394.5,382.28000000000003) scale(1.0277,1)" font-size="14" fill="#1f1f1f" stroke="#1f1f1f" stroke-width="0.2" text-anchor="end">09.06.2014</text>
<text transform="translate(402.5,382.28000000000003) scale(1.0013,1)" font-size="14" fill="#1f1f1f" stroke="#1f1f1f" stroke-width="0.2">Brosina Hoffman</text>
<text transform="translate(569.4,382.28000000000003) scale(0.9853,1)" font-size="14" fill="#1f1f1f" stroke="#1f1f1f" stroke-width="0.2">California</text>
<text transform="translate(709.6,382.28000000000003) scale(0.9429,1)" font-size="14" fill="#1f1f1f" stroke="#1f1f1f" stroke-width="0.2">Zachód</text>
<text transform="translate(91,405.82) scale(1.0089,1)" font-size="14" fill="#1f1f1f" stroke="#1f1f1f" stroke-width="0.2" text-anchor="end">8</text>
<text transform="translate(98.7,405.82) scale(0.9947,1)" font-size="14" fill="#1f1f1f" stroke="#1f1f1f" stroke-width="0.2">CA-2014-115812</text>
<text transform="translate(394.5,405.82) scale(1.0277,1)" font-size="14" fill="#1f1f1f" stroke="#1f1f1f" stroke-width="0.2" text-anchor="end">09.06.2014</text>
<text transform="translate(402.5,405.82) scale(1.0013,1)" font-size="14" fill="#1f1f1f" stroke="#1f1f1f" stroke-width="0.2">Brosina Hoffman</text>
<text transform="translate(569.4,405.82) scale(0.9853,1)" font-size="14" fill="#1f1f1f" stroke="#1f1f1f" stroke-width="0.2">California</text>
<text transform="translate(709.6,405.82) scale(0.9429,1)" font-size="14" fill="#1f1f1f" stroke="#1f1f1f" stroke-width="0.2">Zachód</text>
<text transform="translate(91,429.35999999999996) scale(1.0089,1)" font-size="14" fill="#1f1f1f" stroke="#1f1f1f" stroke-width="0.2" text-anchor="end">9</text>
<text transform="translate(98.7,429.35999999999996) scale(0.9947,1)" font-size="14" fill="#1f1f1f" stroke="#1f1f1f" stroke-width="0.2">CA-2014-115812</text>
<text transform="translate(394.5,429.35999999999996) scale(1.0277,1)" font-size="14" fill="#1f1f1f" stroke="#1f1f1f" stroke-width="0.2" text-anchor="end">09.06.2014</text>
<text transform="translate(402.5,429.35999999999996) scale(1.0013,1)" font-size="14" fill="#1f1f1f" stroke="#1f1f1f" stroke-width="0.2">Brosina Hoffman</text>
<text transform="translate(569.4,429.35999999999996) scale(0.9853,1)" font-size="14" fill="#1f1f1f" stroke="#1f1f1f" stroke-width="0.2">California</text>
<text transform="translate(709.6,429.35999999999996) scale(0.9429,1)" font-size="14" fill="#1f1f1f" stroke="#1f1f1f" stroke-width="0.2">Zachód</text>
<text transform="translate(91,452.9) scale(1.0089,1)" font-size="14" fill="#1f1f1f" stroke="#1f1f1f" stroke-width="0.2" text-anchor="end">10</text>
<text transform="translate(98.7,452.9) scale(0.9947,1)" font-size="14" fill="#1f1f1f" stroke="#1f1f1f" stroke-width="0.2">CA-2014-115812</text>
<text transform="translate(394.5,452.9) scale(1.0277,1)" font-size="14" fill="#1f1f1f" stroke="#1f1f1f" stroke-width="0.2" text-anchor="end">09.06.2014</text>
<text transform="translate(402.5,452.9) scale(1.0013,1)" font-size="14" fill="#1f1f1f" stroke="#1f1f1f" stroke-width="0.2">Brosina Hoffman</text>
<text transform="translate(569.4,452.9) scale(0.9853,1)" font-size="14" fill="#1f1f1f" stroke="#1f1f1f" stroke-width="0.2">California</text>
<text transform="translate(709.6,452.9) scale(0.9429,1)" font-size="14" fill="#1f1f1f" stroke="#1f1f1f" stroke-width="0.2">Zachód</text>
<text transform="translate(91,476.44) scale(1.0089,1)" font-size="14" fill="#1f1f1f" stroke="#1f1f1f" stroke-width="0.2" text-anchor="end">11</text>
<text transform="translate(98.7,476.44) scale(0.9947,1)" font-size="14" fill="#1f1f1f" stroke="#1f1f1f" stroke-width="0.2">CA-2014-115812</text>
<text transform="translate(394.5,476.44) scale(1.0277,1)" font-size="14" fill="#1f1f1f" stroke="#1f1f1f" stroke-width="0.2" text-anchor="end">14.06.2014</text>
<text transform="translate(402.5,476.44) scale(1.0013,1)" font-size="14" fill="#1f1f1f" stroke="#1f1f1f" stroke-width="0.2">Brosina Hoffman</text>
<text transform="translate(569.4,476.44) scale(0.9853,1)" font-size="14" fill="#1f1f1f" stroke="#1f1f1f" stroke-width="0.2">California</text>
<text transform="translate(709.6,476.44) scale(0.9429,1)" font-size="14" fill="#1f1f1f" stroke="#1f1f1f" stroke-width="0.2">Zachód</text>
<text transform="translate(91,499.97999999999996) scale(1.0089,1)" font-size="14" fill="#1f1f1f" stroke="#1f1f1f" stroke-width="0.2" text-anchor="end">12</text>
<text transform="translate(98.7,499.97999999999996) scale(0.9947,1)" font-size="14" fill="#1f1f1f" stroke="#1f1f1f" stroke-width="0.2">CA-2014-115812</text>
<text transform="translate(394.5,499.97999999999996) scale(1.0277,1)" font-size="14" fill="#1f1f1f" stroke="#1f1f1f" stroke-width="0.2" text-anchor="end">14.06.2014</text>
<text transform="translate(402.5,499.97999999999996) scale(1.0013,1)" font-size="14" fill="#1f1f1f" stroke="#1f1f1f" stroke-width="0.2">Brosina Hoffman</text>
<text transform="translate(569.4,499.97999999999996) scale(0.9853,1)" font-size="14" fill="#1f1f1f" stroke="#1f1f1f" stroke-width="0.2">California</text>
<text transform="translate(709.6,499.97999999999996) scale(0.9429,1)" font-size="14" fill="#1f1f1f" stroke="#1f1f1f" stroke-width="0.2">Zachód</text>
<text transform="translate(91,523.52) scale(1.0089,1)" font-size="14" fill="#1f1f1f" stroke="#1f1f1f" stroke-width="0.2" text-anchor="end">13</text>
<text transform="translate(98.7,523.52) scale(0.9947,1)" font-size="14" fill="#1f1f1f" stroke="#1f1f1f" stroke-width="0.2">CA-2017-114412</text>
<text transform="translate(394.5,523.52) scale(1.0277,1)" font-size="14" fill="#1f1f1f" stroke="#1f1f1f" stroke-width="0.2" text-anchor="end">20.04.2017</text>
<text transform="translate(402.5,523.52) scale(1.023,1)" font-size="14" fill="#1f1f1f" stroke="#1f1f1f" stroke-width="0.2">Andrew Allen</text>
<text transform="translate(569.4,523.52) scale(1.0089,1)" font-size="14" fill="#1f1f1f" stroke="#1f1f1f" stroke-width="0.2">North Carolina</text>
<text transform="translate(709.6,523.52) scale(0.9919,1)" font-size="14" fill="#1f1f1f" stroke="#1f1f1f" stroke-width="0.2">Południe</text>
<text transform="translate(91,547.06) scale(1.0089,1)" font-size="14" fill="#1f1f1f" stroke="#1f1f1f" stroke-width="0.2" text-anchor="end">14</text>
<text transform="translate(98.7,547.06) scale(0.9947,1)" font-size="14" fill="#1f1f1f" stroke="#1f1f1f" stroke-width="0.2">CA-2016-161389</text>
<text transform="translate(394.5,547.06) scale(1.0277,1)" font-size="14" fill="#1f1f1f" stroke="#1f1f1f" stroke-width="0.2" text-anchor="end">10.12.2016</text>
<text transform="translate(402.5,547.06) scale(1.0136,1)" font-size="14" fill="#1f1f1f" stroke="#1f1f1f" stroke-width="0.2">Irene Maddox</text>
<text transform="translate(569.4,547.06) scale(1.023,1)" font-size="14" fill="#1f1f1f" stroke="#1f1f1f" stroke-width="0.2">Washington</text>
<text transform="translate(709.6,547.06) scale(0.9429,1)" font-size="14" fill="#1f1f1f" stroke="#1f1f1f" stroke-width="0.2">Zachód</text>
<text transform="translate(91,570.5999999999999) scale(1.0089,1)" font-size="14" fill="#1f1f1f" stroke="#1f1f1f" stroke-width="0.2" text-anchor="end">15</text>
<text transform="translate(98.7,570.5999999999999) scale(0.9947,1)" font-size="14" fill="#1f1f1f" stroke="#1f1f1f" stroke-width="0.2">US-2015-118983</text>
<text transform="translate(394.5,570.5999999999999) scale(1.0277,1)" font-size="14" fill="#1f1f1f" stroke="#1f1f1f" stroke-width="0.2" text-anchor="end">26.11.2015</text>
<text transform="translate(402.5,570.5999999999999) scale(0.99,1)" font-size="14" fill="#1f1f1f" stroke="#1f1f1f" stroke-width="0.2">Harold Pawlan</text>
<text transform="translate(569.4,570.5999999999999) scale(0.9193,1)" font-size="14" fill="#1f1f1f" stroke="#1f1f1f" stroke-width="0.2">Texas</text>
<text transform="translate(709.6,570.5999999999999) scale(1.0089,1)" font-size="14" fill="#1f1f1f" stroke="#1f1f1f" stroke-width="0.2">Centrum</text>
<text transform="translate(91,594.1399999999999) scale(1.0089,1)" font-size="14" fill="#1f1f1f" stroke="#1f1f1f" stroke-width="0.2" text-anchor="end">16</text>
<text transform="translate(98.7,594.1399999999999) scale(0.9947,1)" font-size="14" fill="#1f1f1f" stroke="#1f1f1f" stroke-width="0.2">US-2015-118983</text>
<text transform="translate(394.5,594.1399999999999) scale(1.0277,1)" font-size="14" fill="#1f1f1f" stroke="#1f1f1f" stroke-width="0.2" text-anchor="end">26.11.2015</text>
<text transform="translate(402.5,594.1399999999999) scale(0.99,1)" font-size="14" fill="#1f1f1f" stroke="#1f1f1f" stroke-width="0.2">Harold Pawlan</text>
<text transform="translate(569.4,594.1399999999999) scale(0.9193,1)" font-size="14" fill="#1f1f1f" stroke="#1f1f1f" stroke-width="0.2">Texas</text>
<text transform="translate(709.6,594.1399999999999) scale(1.0089,1)" font-size="14" fill="#1f1f1f" stroke="#1f1f1f" stroke-width="0.2">Centrum</text>
<text transform="translate(91,617.68) scale(1.0089,1)" font-size="14" fill="#1f1f1f" stroke="#1f1f1f" stroke-width="0.2" text-anchor="end">17</text>
<text transform="translate(98.7,617.68) scale(0.9947,1)" font-size="14" fill="#1f1f1f" stroke="#1f1f1f" stroke-width="0.2">CA-2014-105893</text>
<text transform="translate(394.5,617.68) scale(1.0277,1)" font-size="14" fill="#1f1f1f" stroke="#1f1f1f" stroke-width="0.2" text-anchor="end">18.11.2014</text>
<text transform="translate(402.5,617.68) scale(1.0089,1)" font-size="14" fill="#1f1f1f" stroke="#1f1f1f" stroke-width="0.2">Pete Kriz</text>
<text transform="translate(569.4,617.68) scale(0.99,1)" font-size="14" fill="#1f1f1f" stroke="#1f1f1f" stroke-width="0.2">Wisconsin</text>
<text transform="translate(709.6,617.68) scale(1.0089,1)" font-size="14" fill="#1f1f1f" stroke="#1f1f1f" stroke-width="0.2">Centrum</text>
<line x1="34" y1="175" x2="34" y2="598.54" stroke="#1f6b40" stroke-width="2.1"/>
<line x1="34" y1="176" x2="34" y2="598.54" stroke="#e6fbe9" stroke-width="2.1" stroke-dasharray="2.6 8.1" stroke-dashoffset="10.2"/>
<line x1="34" y1="176.2" x2="805" y2="176.2" stroke="#e9fbec" stroke-width="1.9" stroke-dasharray="2.4 8.18" stroke-dashoffset="6.1"/>
<line x1="33" y1="598.54" x2="805" y2="598.54" stroke="#1f6b40" stroke-width="2.5"/>
<line x1="33" y1="598.54" x2="805" y2="598.54" stroke="#d8f3df" stroke-width="2.5" stroke-dasharray="2.6 7.9" stroke-dashoffset="-12.2"/>
<rect x="142" y="262.5" width="344" height="3" fill="#f2d2f2" opacity="0.7" filter="url(#pg)"/>
<g filter="url(#sh)">
<path d="M136.5 271.5 Q136.5 265.5 142.5 265.5 H485.5 Q491.5 265.5 491.5 271.5 V455.5 Q491.5 460.5 486.5 460.5 H141.5 Q136.5 460.5 136.5 455.5 Z" stroke="#78578e" fill="#f0f0f0" stroke-width="1.2" />
</g>
<path d="M136.5 271.5 Q136.5 265.5 142.5 265.5 H485.5 Q491.5 265.5 491.5 271.5 V292.5 H136.5 Z" stroke="none" fill="#690b8e" stroke-width="1" />
<text x="145" y="283.1" font-size="11.5" fill="#f5e4fb" stroke="#f5e4fb" stroke-width="0.2" textLength="150" lengthAdjust="spacingAndGlyphs">Przenoszenie tabeli przestawnej</text>
<text x="426.8" y="284" font-size="12" fill="#f3dcfb" textLength="5.5" lengthAdjust="spacingAndGlyphs" stroke-width="0">?</text>
<path d="M465.8 274.8 L475.2 284.2 M475.2 274.8 L465.8 284.2" stroke="#f0d8fa" fill="none" stroke-width="0.9" />
<text x="143" y="309.8" font-size="10.5" fill="#242424" stroke="#242424" stroke-width="0.2" textLength="181.5" lengthAdjust="spacingAndGlyphs">Wybierz dane, które chcesz analizować</text>
<line x1="327.5" y1="305.5" x2="482.5" y2="305.5" stroke="#dcdcdc" stroke-width="1" />
<circle cx="157.3" cy="324.5" r="6" fill="#0f5aa6"/>
<circle cx="157.3" cy="324.5" r="2.6" fill="#ffffff"/>
<text x="167" y="328.4" font-size="10.5" fill="#242424" stroke="#242424" stroke-width="0.2" textLength="116.6" lengthAdjust="spacingAndGlyphs">Zaznacz tabelę lub zakres</text>
<line x1="213.5" y1="329.6" x2="219.5" y2="329.6" stroke="#242424" stroke-width="0.8" />
<text x="183.6" y="347.6" font-size="10.5" fill="#242424" stroke="#242424" stroke-width="0.2" textLength="66" lengthAdjust="spacingAndGlyphs">Tabela/zakres:</text>
<line x1="184" y1="349" x2="189" y2="349" stroke="#242424" stroke-width="0.8" />
<rect x="258.5" y="335" width="227" height="17" fill="#ffffff" stroke="#b0b0b0" stroke-width="1" />
<rect x="466" y="335.5" width="19.5" height="16" fill="#fafafa" stroke="#c9c9c9" stroke-width="0.8" />
<path d="M471.5 343 L475.5 339 L479.5 343 M475.5 339.5 V346" stroke="#111" fill="none" stroke-width="1.8" />
<line x1="471" y1="348" x2="480" y2="348" stroke="#111" stroke-width="1" />
<text x="262" y="348.4" font-size="10.5" fill="#111" stroke="#111" stroke-width="0.2" textLength="77" lengthAdjust="spacingAndGlyphs">Dane!$A$1:$L$17</text>
<line x1="340.6" y1="338" x2="340.6" y2="351" stroke="#111" stroke-width="0.9" />
<circle cx="157.3" cy="363.5" r="5.7" fill="#f2f2f2" stroke="#d0d0d0" stroke-width="1"/>
<text x="167" y="367" font-size="10.5" fill="#b0b0b0" stroke="#b0b0b0" stroke-width="0.2" textLength="155" lengthAdjust="spacingAndGlyphs">Użyj zewnętrznego źródła danych</text>
<rect x="184.5" y="374" width="111.5" height="18" fill="#fbfbfb" stroke="#c8c8c8" stroke-width="1" rx="3" />
<text x="191.6" y="387" font-size="10.5" fill="#9a9a9a" stroke="#9a9a9a" stroke-width="0.2" textLength="96.8" lengthAdjust="spacingAndGlyphs">Wybierz połączenie...</text>
<text x="184" y="404.4" font-size="10.5" fill="#a0a0a0" stroke="#a0a0a0" stroke-width="0.2" textLength="85.6" lengthAdjust="spacingAndGlyphs">Nazwa połączenia:</text>
<rect x="342.5" y="432.5" width="66.5" height="19.5" fill="#f3f9fd" stroke="#4679a6" stroke-width="1.1" rx="3" />
<text x="369" y="445.6" font-size="10.5" fill="#1a1a1a" textLength="13" lengthAdjust="spacingAndGlyphs" stroke="#1a1a1a" stroke-width="0.45">OK</text>
<rect x="418.5" y="432.5" width="66.5" height="19.5" fill="#fbfbfb" stroke="#d2d2d2" stroke-width="1" rx="3" />
<text x="436.7" y="445.6" font-size="10.5" fill="#1a1a1a" stroke="#1a1a1a" stroke-width="0.2" textLength="30.3" lengthAdjust="spacingAndGlyphs">Anuluj</text>
<path d="M490.5 452.5 L483.5 459.5" stroke="#9a8aa6" fill="none" stroke-width="0.9" />
</svg></body></html>
